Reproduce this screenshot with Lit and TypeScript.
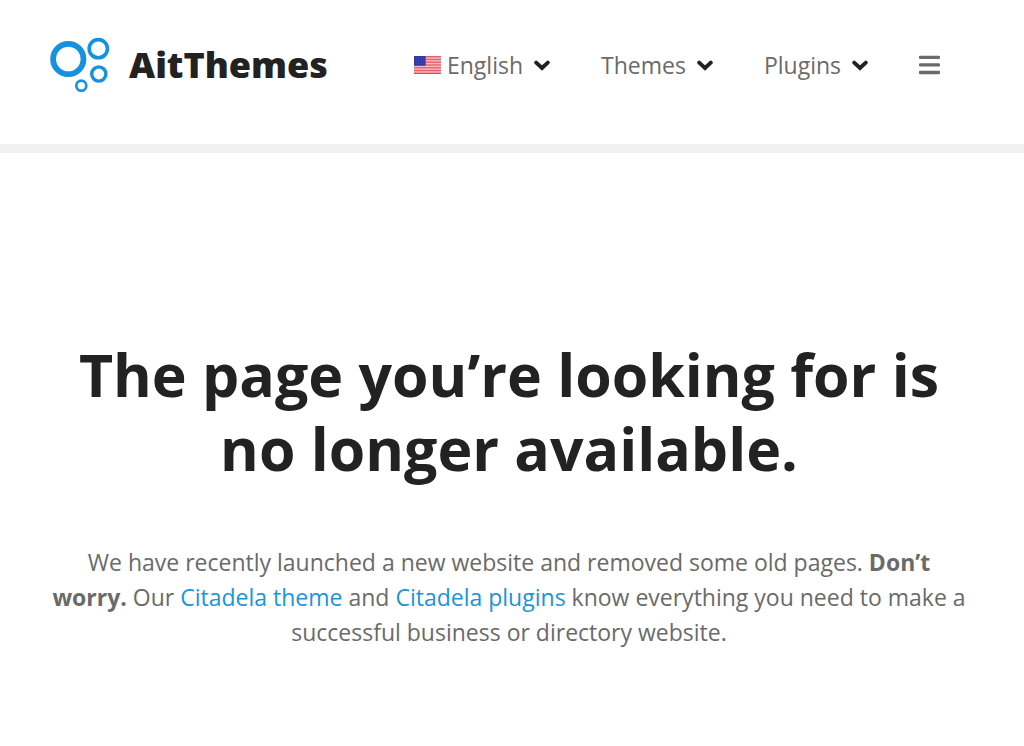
import { LitElement, html, css, svg } from "lit";
import { customElement } from "lit/decorators.js";

const chevron = html`<svg class="chevron" viewBox="0 0 16 12" aria-hidden="true"><path d="M2.2 3.6 8 9l5.8-5.4" fill="none" stroke="#222222" stroke-width="3.9" stroke-linecap="round"/></svg>`;

const stripes = [0, 2, 4, 6, 8, 10, 12].map((n) => svg`<rect y=${(n * 18) / 13} width="26" height="1.4" fill="#e8606c"/>`);
const stars = [2, 4.5, 7].flatMap((y) => [2, 4.5, 7, 9.5].map((x) => svg`<circle cx=${x} cy=${y} r=".4" fill="#7f86d0"/>`));

@customElement("app-root")
export class AppRoot extends LitElement {
  static styles = css`
    :host { display: block; min-height: 100vh; background: #fff; color: #6a6a6a; font-family: "Open Sans", "Noto Sans", sans-serif; }
    header { display: flex; align-items: center; justify-content: space-between; box-sizing: border-box; min-height: 153px; padding: 0 84px 15px 50px; border-bottom: 9px solid #f1f1f1; }
    a { color: #1b95d8; text-decoration: none; }
    .brand { display: flex; align-items: center; gap: 19px; color: #222222; font-size: 36px; line-height: 56px; font-weight: 800; }
    .logo { width: 60px; height: 56px; }
    nav { display: flex; align-items: center; gap: 51px; }
    button { display: flex; align-items: center; padding: 0; border: 0; background: none; color: inherit; font: 23px/32px "Open Sans", "Noto Sans", sans-serif; cursor: pointer; }
    .flag { width: 27px; height: 18px; margin-right: 6px; }
    .chevron { width: 16px; height: 12px; margin-left: 11px; }
    .bars { width: 21px; height: 20px; }
    main { padding: 184px 56px 96px 50px; text-align: center; }
    h1 { margin: 0 0 60px; color: #222222; font-size: 59px; line-height: 74px; font-weight: 700; }
    p { margin: 0; font-size: 23px; line-height: 35px; }
  `;

  render() {
    return html`
      <header>
        <a class="brand" href="#">
          <svg class="logo" viewBox="0 0 60 56" fill="none" stroke="#1492e0" aria-hidden="true">
            <circle cx="18.3" cy="22" r="15.2" stroke-width="5.8"/>
            <circle cx="48.3" cy="11.7" r="9.1" stroke-width="3.6"/>
            <circle cx="48.8" cy="37" r="7.1" stroke-width="3.4"/>
            <circle cx="31.3" cy="48.7" r="5" stroke-width="2.7"/>
          </svg>
          <span>AitThemes</span>
        </a>
        <nav>
          <button><svg class="flag" viewBox="0 0 26 18" preserveAspectRatio="none" aria-hidden="true"><rect width="26" height="18" fill="#f4bfc4"/>${stripes}<rect width="11.2" height="9.7" fill="#3038a4"/>${stars}<path d="M0 17.6h26" stroke="#a8545c" stroke-width=".8"/></svg>English${chevron}</button>
          <button>Themes${chevron}</button>
          <button>Plugins${chevron}</button>
          <button aria-label="Menu"><svg class="bars" viewBox="0 0 21 20" aria-hidden="true"><path d="M1.3 2.3h18.4M1.3 9.9h18.4M1.3 17.5h18.4" stroke="#6a6a6a" stroke-width="3.3" stroke-linecap="round"/></svg></button>
        </nav>
      </header>
      <main>
        <h1>The page you’re looking for is no longer available.</h1>
        <p>We have recently launched a new website and removed some old pages. <strong>Don’t worry.</strong> Our <a href="#">Citadela theme</a> and <a href="#">Citadela plugins</a> know everything you need to make a successful business or directory website.</p>
      </main>
    `;
  }
}
